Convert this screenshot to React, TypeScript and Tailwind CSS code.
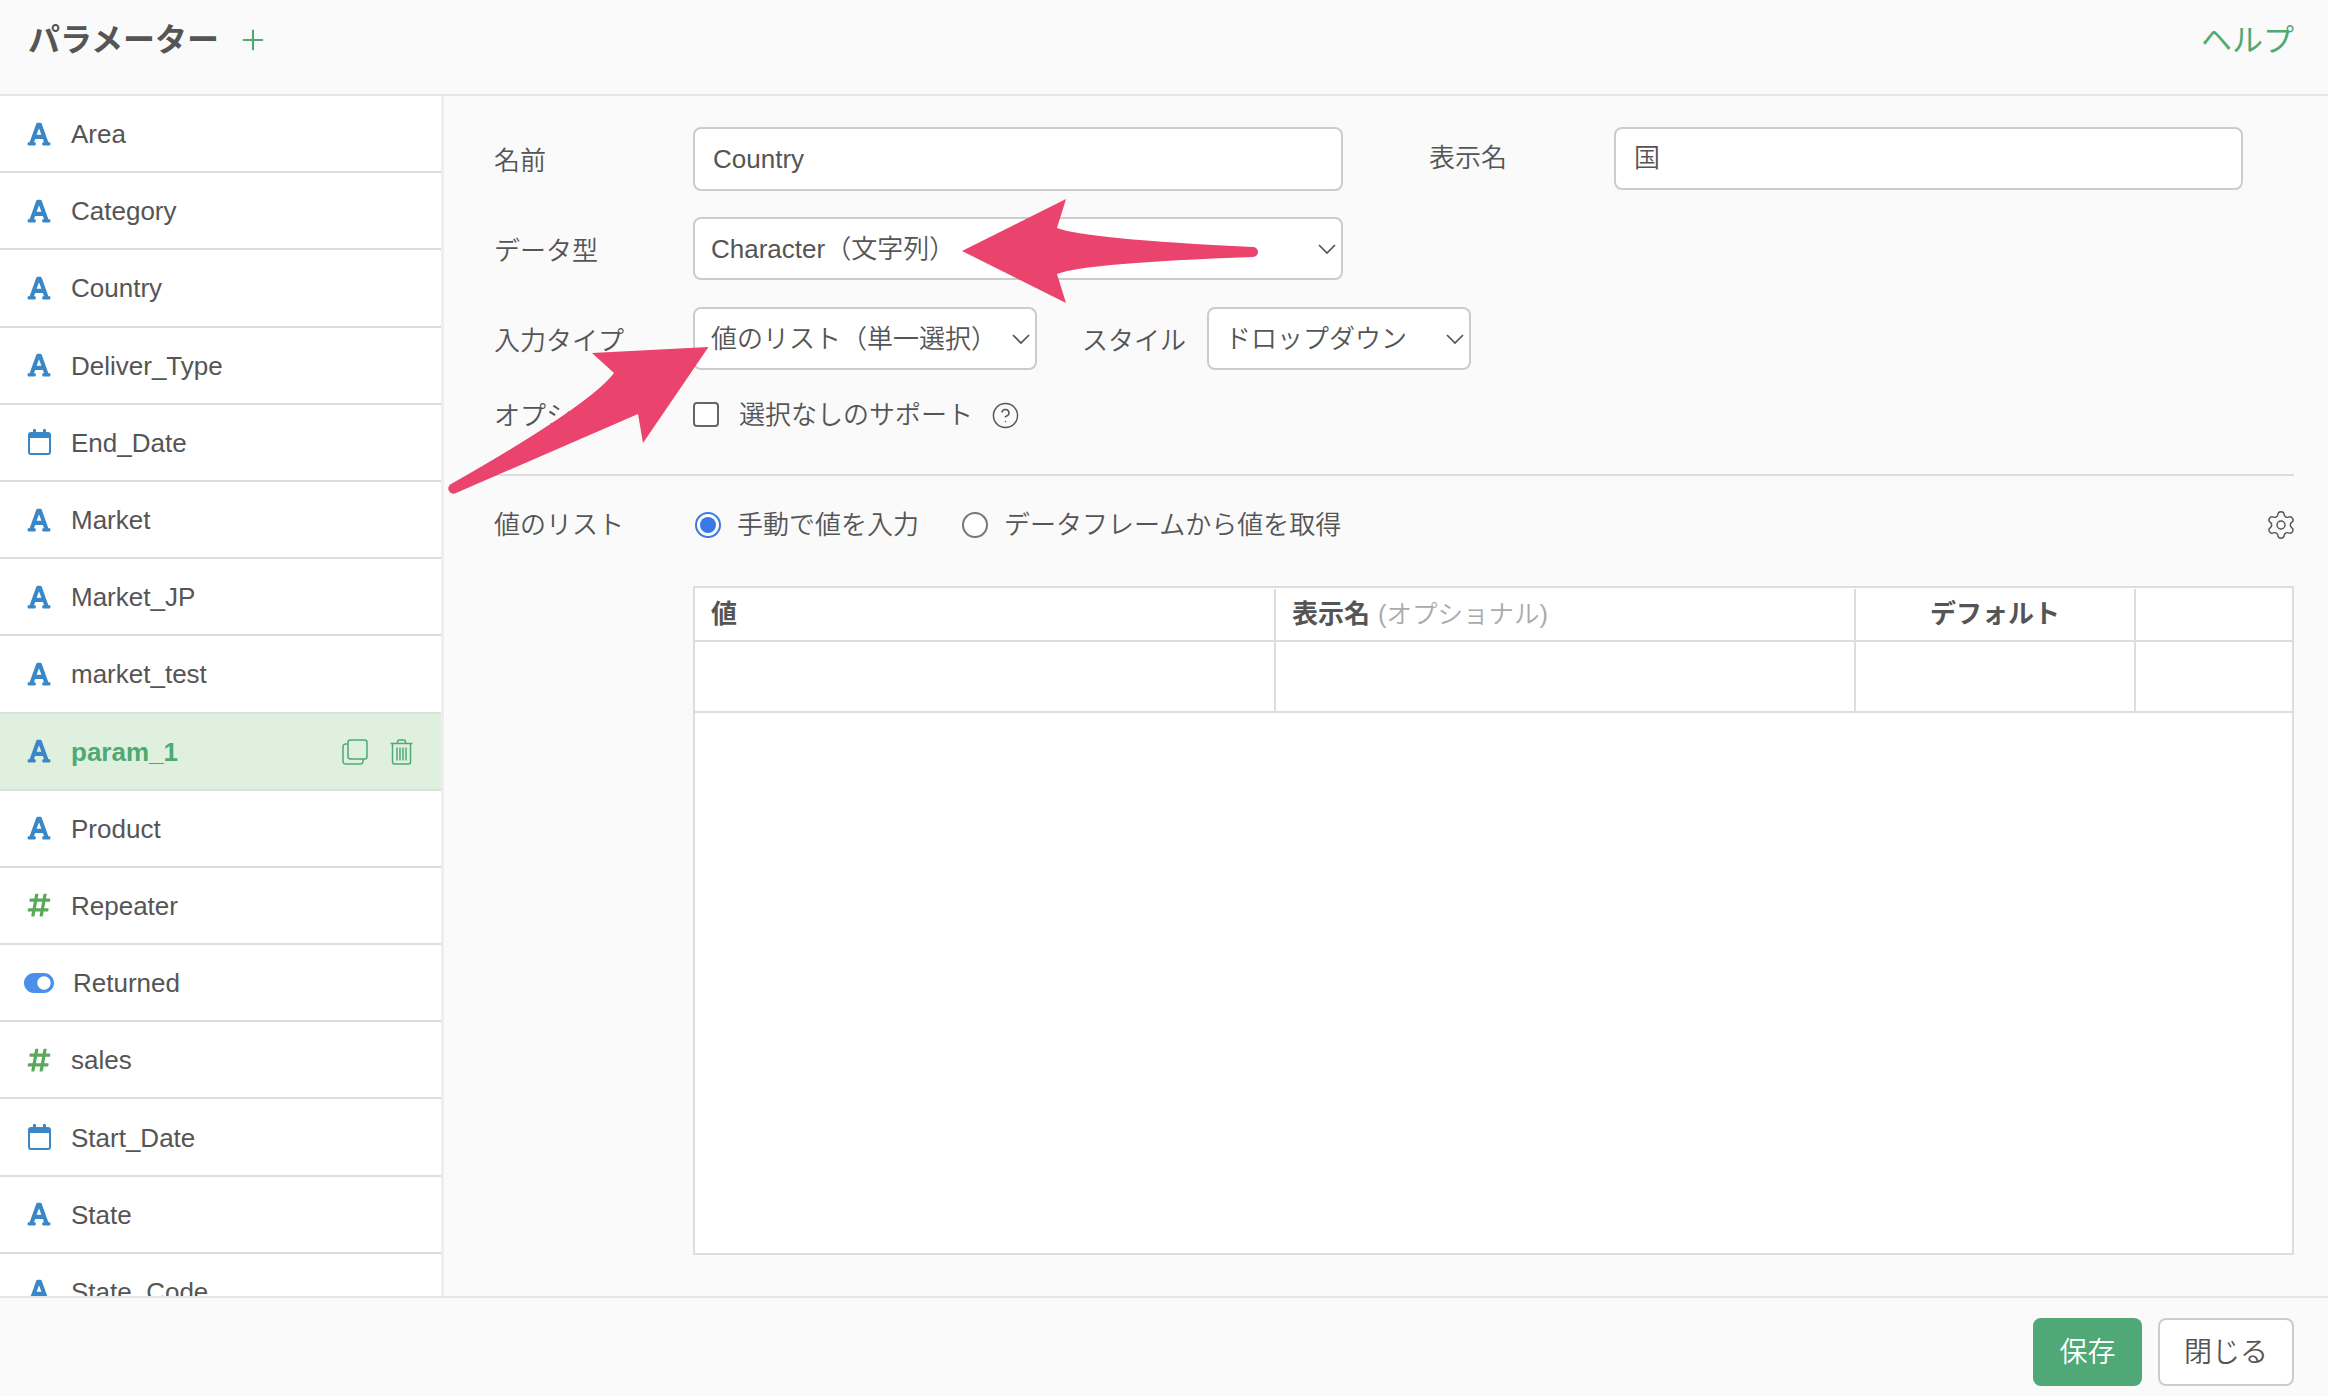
import { CircleHelp, Plus, Settings } from "lucide-react";
import { FaFont, FaHashtag, FaToggleOn } from "react-icons/fa";

type ParamKind = "text" | "date" | "number" | "bool";

interface IParam {
  name: string;
  kind: ParamKind;
  active?: boolean;
}

const params: IParam[] = [
  { name: "Area", kind: "text" },
  { name: "Category", kind: "text" },
  { name: "Country", kind: "text" },
  { name: "Deliver_Type", kind: "text" },
  { name: "End_Date", kind: "date" },
  { name: "Market", kind: "text" },
  { name: "Market_JP", kind: "text" },
  { name: "market_test", kind: "text" },
  { name: "param_1", kind: "text", active: true },
  { name: "Product", kind: "text" },
  { name: "Repeater", kind: "number" },
  { name: "Returned", kind: "bool" },
  { name: "sales", kind: "number" },
  { name: "Start_Date", kind: "date" },
  { name: "State", kind: "text" },
  { name: "State_Code", kind: "text" },
];

function CalendarIcon() {
  return (
    <svg width="23" height="26" viewBox="0 0 23 26" className="text-[#3a87c8]">
      <rect x="1" y="4" width="21" height="21" rx="2" fill="none" stroke="currentColor" strokeWidth="2" />
      <rect x="1" y="4" width="21" height="5" fill="currentColor" />
      <rect x="5" y="0" width="3" height="6" rx="1" fill="currentColor" />
      <rect x="15" y="0" width="3" height="6" rx="1" fill="currentColor" />
    </svg>
  );
}

function KindIcon({ kind }: { kind: ParamKind }) {
  if (kind === "date") return <CalendarIcon />;
  if (kind === "number") return <FaHashtag size={26} className="ml-[-2px] text-[#5aa85a]" />;
  if (kind === "bool") return <FaToggleOn size={30} className="ml-[-4px] text-[#4a90e8]" />;
  return <FaFont size={26} className="ml-[-2px] text-[#3a87c8]" />;
}

function CopyIcon() {
  return (
    <svg width="26" height="26" viewBox="0 0 26 26" fill="none" stroke="#4fa973" strokeWidth="1.5">
      <rect x="6" y="1" width="19" height="19" rx="2.5" />
      <path d="M6 5H3.5A2.5 2.5 0 0 0 1 7.5v15A2.5 2.5 0 0 0 3.5 25h15a2.5 2.5 0 0 0 2.5-2.5V20" />
    </svg>
  );
}

function TrashIcon() {
  return (
    <svg width="23" height="26" viewBox="0 0 23 26" fill="none" stroke="#4fa973" strokeWidth="1.5">
      <path d="M0.5 4.5h22" />
      <path d="M7.5 4V3a2 2 0 0 1 2-2h4a2 2 0 0 1 2 2v1" />
      <path d="M2.5 5v18a2 2 0 0 0 2 2h14a2 2 0 0 0 2-2V5" />
      <path d="M7 8.5v13M10 8.5v13M13 8.5v13M16 8.5v13" />
    </svg>
  );
}

function Chevron() {
  return (
    <svg width="18" height="10" viewBox="0 0 18 10" fill="none" stroke="#555555" strokeWidth="1.75" className="shrink-0">
      <path d="M1 1l8 8 8-8" />
    </svg>
  );
}

function ParamRow({ param }: { param: IParam }) {
  const shifted = param.kind === "bool";
  return (
    <div
      className={`flex h-[77.2px] shrink-0 items-center border-b-2 border-[#dddddd] pl-[28px] pr-[28px] ${
        param.active ? "bg-[#e0f0de]" : "bg-white"
      }`}
    >
      <div className={`flex shrink-0 items-center ${shifted ? "w-[45px]" : "w-[43px]"}`}>
        <KindIcon kind={param.kind} />
      </div>
      <span className={`pt-[2px] ${param.active ? "font-bold text-[#4fa973]" : ""}`}>{param.name}</span>
      {param.active && (
        <div className="ml-auto flex items-center gap-[22px] pt-[2px]">
          <CopyIcon />
          <TrashIcon />
        </div>
      )}
    </div>
  );
}

function FieldLabel({ text, className }: { text: string; className: string }) {
  return <span className={`pt-[5px] ${className}`}>{text}</span>;
}

function Field({ value, className }: { value: string; className: string }) {
  return (
    <div className={`flex items-center rounded-lg border-2 border-[#cccccc] bg-white pl-[18px] ${className}`}>
      {value}
    </div>
  );
}

function SelectBox({ value, className }: { value: string; className: string }) {
  return (
    <div
      className={`flex items-center justify-between rounded-lg border-2 border-[#cccccc] bg-white pl-[16px] pr-[5px] ${className}`}
    >
      <span className="pt-[1px]">{value}</span>
      <Chevron />
    </div>
  );
}

function Radio({ checked, label }: { checked?: boolean; label: string }) {
  return (
    <div className="flex items-center gap-[16px]">
      <span
        className={`flex h-[26px] w-[26px] items-center justify-center rounded-full border-2 bg-white ${
          checked ? "border-[#3b78e7]" : "border-[#777777]"
        }`}
      >
        {checked && <span className="h-[16px] w-[16px] rounded-full bg-[#3b78e7]" />}
      </span>
      <span>{label}</span>
    </div>
  );
}

function Arrows() {
  return (
    <svg
      viewBox="0 0 2328 1396"
      className="pointer-events-none absolute left-0 top-0 h-[1396px] w-[2328px]"
      fill="#ea436e"
    >
      <path d="M962 251 L1066 199 L1057 228 Q1085 239 1253 247 A5 5 0 0 1 1253 257 Q1085 263 1057 274 L1066 303 Z" />
      <path d="M708.5 347 L592 353 L614 373 Q590 405 451 484 A5 5 0 0 0 456 493 L638 414 L643 443 Z" />
    </svg>
  );
}

export default function App() {
  return (
    <div className="relative flex h-[1396px] w-[2328px] flex-col overflow-hidden bg-[#fafafa] font-['Liberation_Sans','Noto_Sans_CJK_JP',sans-serif] text-[26px] font-[350] text-[#555555]">
      <header className="flex h-[96px] shrink-0 items-start justify-between border-b-2 border-[#e6e6e6] pl-[28px] pr-[34px]">
        <div className="flex h-[80px] items-center gap-[18px]">
          <span className="text-[32px] font-bold">パラメーター</span>
          <Plus size={32} strokeWidth={1.6} className="text-[#4fa973]" />
        </div>
        <span className="flex h-[82px] items-center text-[31px] font-normal text-[#4fa973]">ヘルプ</span>
      </header>

      <div className="flex min-h-0 flex-1">
        <aside className="flex w-[444px] shrink-0 flex-col overflow-hidden border-r-[3px] border-[#eeeeee] bg-white">
          {params.map((param) => (
            <ParamRow key={param.name} param={param} />
          ))}
        </aside>

        <main className="flex flex-1 flex-col pl-[50px] pr-[34px] pt-[31px]">
          <div className="flex h-[64px] items-center">
            <FieldLabel text="名前" className="w-[199px]" />
            <Field value="Country" className="h-[64px] w-[650px]" />
            <span className="ml-[86px] w-[185px] -translate-y-[1px]">表示名</span>
            <Field value="国" className="h-[63px] w-[629px] -translate-y-[1px]" />
          </div>

          <div className="mt-[26px] flex h-[63px] items-center">
            <FieldLabel text="データ型" className="w-[199px]" />
            <SelectBox value="Character（文字列）" className="h-[63px] w-[650px]" />
          </div>

          <div className="mt-[27px] flex h-[63px] items-center">
            <FieldLabel text="入力タイプ" className="w-[199px]" />
            <SelectBox value="値のリスト（単一選択）" className="h-[63px] w-[344px]" />
            <FieldLabel text="スタイル" className="ml-[45px] w-[125px]" />
            <SelectBox value="ドロップダウン" className="h-[63px] w-[264px]" />
          </div>

          <div className="mt-[30px] flex h-[28px] items-center">
            <FieldLabel text="オプション" className="w-[199px]" />
            <span className="h-[25px] w-[26px] rounded border-2 border-[#666666] bg-white" />
            <span className="ml-[20px] pt-[2px]">選択なしのサポート</span>
            <CircleHelp size={29} strokeWidth={1.25} className="ml-[18px] mt-[3px]" />
          </div>

          <div className="mt-[46px] h-[2px] bg-[#dddddd]" />

          <div className="mt-[35px] flex h-[28px] items-center">
            <span className="w-[199px]">値のリスト</span>
            <div className="ml-[2px]">
              <Radio checked label="手動で値を入力" />
            </div>
            <div className="ml-[43px]">
              <Radio label="データフレームから値を取得" />
            </div>
            <Settings size={32} strokeWidth={1.1} className="ml-auto mr-[-3px]" />
          </div>

          <div className="ml-[199px] mt-[47px] h-[669px] border-2 border-[#dddddd] bg-white">
            <div className="grid h-[54px] grid-cols-[581px_580px_280px_1fr] items-stretch border-b-2 border-[#dddddd] pt-[1px]">
              <div className="flex items-center border-r-2 border-[#dddddd] pl-[16px] font-bold">値</div>
              <div className="flex items-center border-r-2 border-[#dddddd] pl-[16px]">
                <span className="font-bold">表示名</span>
                <span className="ml-[8px] text-[25.5px] text-[#aaaaaa]">(オプショナル)</span>
              </div>
              <div className="flex items-center justify-center border-r-2 border-[#dddddd] font-bold">デフォルト</div>
              <div />
            </div>
            <div className="grid h-[71px] grid-cols-[581px_580px_280px_1fr] border-b-2 border-[#dddddd]">
              <div className="border-r-2 border-[#dddddd]" />
              <div className="border-r-2 border-[#dddddd]" />
              <div className="border-r-2 border-[#dddddd]" />
              <div />
            </div>
          </div>
        </main>
      </div>

      <footer className="flex h-[100px] shrink-0 items-start justify-end gap-[16px] border-t-2 border-[#e6e6e6] bg-[#fafafa] pr-[34px] pt-[20px]">
        <button className="h-[68px] w-[109px] rounded-lg bg-[#4fa875] pt-[2px] text-[28px] text-white">保存</button>
        <button className="h-[68px] w-[136px] rounded-lg border-2 border-[#cccccc] bg-white pt-[2px] text-[28px]">閉じる</button>
      </footer>

      <Arrows />
    </div>
  );
}
